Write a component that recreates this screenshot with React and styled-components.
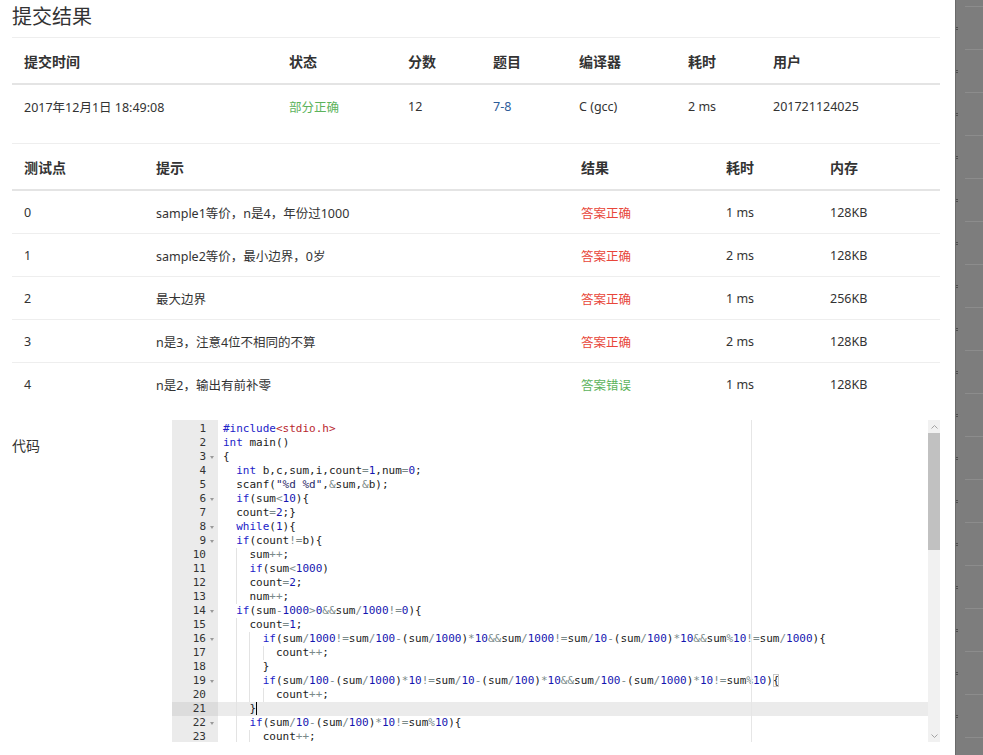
import React from 'react';
import styled, { createGlobalStyle } from 'styled-components';

const GlobalStyle = createGlobalStyle`
  html, body {
    margin: 0;
    padding: 0;
    height: 755px;
    overflow: hidden;
    background: #fff;
  }
  body {
    font-family: "Noto Sans", "Noto Sans CJK SC", sans-serif;
    color: #333;
  }
`;

const colors = {
  text: '#333',
  line: '#eeeeee',
  headLine: '#e4e4e4',
  ok: '#e8463a',
  good: '#5cb35c',
  link: '#2d5c9a',
};

const Page = styled.div`
  display: flex;
  height: 755px;
  overflow: hidden;
`;

const Modal = styled.div`
  width: 955px;
  flex-shrink: 0;
  box-sizing: border-box;
  padding: 0 15px 0 12px;
  background: #fff;
`;

const Backdrop = styled.div`
  flex: 1;
  border-left: 1px solid #6a6a6a;
  background-color: #7d7d7d;
  background-image:
    repeating-linear-gradient(
      to bottom,
      transparent 0 27px,
      #4e4e4e 27px 28px,
      transparent 28px 29px,
      #4e4e4e 29px 30px,
      transparent 30px 43px
    ),
    repeating-linear-gradient(
      to bottom,
      transparent 0 6px,
      #8c8c8c 6px 7px,
      transparent 7px 43px
    );
  background-size: 2px 100%, calc(100% - 9px) 100%;
  background-position: 0 0, 9px 0;
  background-repeat: no-repeat, no-repeat;
`;

const Title = styled.h2`
  margin: 0;
  height: 37px;
  box-sizing: border-box;
  padding-top: 3px;
  font-size: 20px;
  line-height: 28px;
  font-weight: 400;
  color: ${colors.text};
`;

const Grid = styled.div`
  margin-top: ${(p) => p.$gap || 0}px;
`;

const Row = styled.div`
  display: grid;
  grid-template-columns: ${(p) => p.$cols};
  align-items: center;
  height: ${(p) => (p.$head ? 45 : p.$tall ? 43 : 42)}px;
  border-top: ${(p) => (p.$first ? 'none' : `1px solid ${colors.line}`)};
  border-bottom: ${(p) => (p.$head ? `2px solid ${colors.headLine}` : 'none')};
`;

const Cell = styled.div`
  padding-left: 12px;
  font-size: ${(p) => (p.$head ? 14 : 12.5)}px;
  font-weight: ${(p) => (p.$head ? 700 : 400)};
  color: ${(p) => p.$color || colors.text};
  white-space: nowrap;
`;

const CodeSection = styled.div`
  display: flex;
  margin-top: 15px;
`;

const Label = styled.div`
  width: 160px;
  padding-top: 16px;
  font-size: 14px;
  line-height: 20px;
`;

const Editor = styled.div`
  display: flex;
  width: 768px;
  height: 322px;
  overflow: hidden;
  font-family: "DejaVu Sans Mono", "Liberation Mono", monospace;
  font-size: 11px;
  line-height: 14px;
`;

const Gutter = styled.div`
  width: 46px;
  flex-shrink: 0;
  background: #ebebeb;
  padding-top: 2px;
  color: #333;
`;

const GutterCell = styled.div`
  display: flex;
  justify-content: flex-end;
  height: 14px;
  background: ${(p) => (p.$active ? '#dcdcdc' : 'transparent')};
`;

const FoldSlot = styled.span`
  width: 12px;
  display: flex;
  align-items: center;
  padding-left: 4px;
  box-sizing: border-box;
`;

const FoldArrow = styled.span`
  width: 0;
  height: 0;
  border-left: 2.5px solid transparent;
  border-right: 2.5px solid transparent;
  border-top: 3px solid #9a9a9a;
`;

const CodeArea = styled.div`
  flex: 1;
  position: relative;
  padding-top: 2px;
  overflow: hidden;
`;

const PrintMargin = styled.div`
  position: absolute;
  top: 0;
  bottom: 0;
  left: 533px;
  width: 1px;
  background: #e6e6e6;
`;

const CodeLine = styled.div`
  height: 14px;
  padding-left: 5px;
  white-space: pre;
  color: #1c1c1c;
  background: ${(p) => (p.$active ? '#ebebeb' : 'transparent')};
`;

const Indent = styled.span`
  display: inline-block;
  width: 2ch;
  height: 14px;
  vertical-align: top;
  box-sizing: border-box;
  border-left: ${(p) => (p.$guide ? '1px solid #e3e3e3' : 'none')};
`;

const tokenColors = {
  kw: '#2222c8',
  num: '#1515b0',
  op: '#7a8a8a',
  inc: '#b8262e',
  str: '#2a2a6a',
  plain: 'inherit',
};

const Tok = styled.span`
  color: ${(p) => tokenColors[p.$type]};
`;

const Matched = styled.span`
  outline: 1px solid #c8c8c8;
  outline-offset: -1px;
`;

const Cursor = styled.span`
  display: inline-block;
  width: 1px;
  height: 13px;
  background: #000;
  vertical-align: top;
`;

const Scrollbar = styled.div`
  width: 12px;
  flex-shrink: 0;
  display: flex;
  flex-direction: column;
  align-items: center;
  background: #f1f1f1;
`;

const ScrollArrow = styled.div`
  height: 13px;
  width: 12px;
  display: flex;
  align-items: center;
  justify-content: center;
  color: #a3a3a3;
`;

const Thumb = styled.div`
  width: 12px;
  height: 117px;
  background: #c1c1c1;
`;

const Spacer = styled.div`
  flex: 1;
`;

const KEYWORDS = new Set(['int', 'if', 'while']);

const tokenize = (text) => {
  const re = /(#include)|(<stdio\.h>)|("[^"]*")|(\d+)|([A-Za-z_]\w*)|([=!<>+\-*\/%&]+)|(.)/g;
  const out = [];
  let m;
  while ((m = re.exec(text))) {
    let type = 'plain';
    if (m[1]) type = 'kw';
    else if (m[2]) type = 'inc';
    else if (m[3]) type = 'str';
    else if (m[4]) type = 'num';
    else if (m[5]) type = KEYWORDS.has(m[5]) ? 'kw' : 'plain';
    else if (m[6]) type = 'op';
    out.push({ type, text: m[0] });
  }
  return out;
};

const code = [
  '#include<stdio.h>',
  'int main()',
  '{',
  '  int b,c,sum,i,count=1,num=0;',
  '  scanf("%d %d",&sum,&b);',
  '  if(sum<10){',
  '  count=2;}',
  '  while(1){',
  '  if(count!=b){',
  '    sum++;',
  '    if(sum<1000)',
  '    count=2;',
  '    num++;',
  '  if(sum-1000>0&&sum/1000!=0){',
  '    count=1;',
  '      if(sum/1000!=sum/100-(sum/1000)*10&&sum/1000!=sum/10-(sum/100)*10&&sum%10!=sum/1000){',
  '        count++;',
  '      }',
  '      if(sum/100-(sum/1000)*10!=sum/10-(sum/100)*10&&sum/100-(sum/1000)*10!=sum%10){',
  '        count++;',
  '    }',
  '    if(sum/10-(sum/100)*10!=sum%10){',
  '      count++;',
];

const folds = new Set([3, 6, 8, 9, 14, 16, 19, 22]);
const activeLine = 21;
const matchLine = 19;

const Line = ({ text, n }) => {
  const indent = text.match(/^ */)[0].length;
  const body = text.slice(indent);
  const units = Math.floor(indent / 2);
  const tokens = tokenize(body);
  return (
    <CodeLine $active={n === activeLine}>
      {Array.from({ length: units }, (_, i) => (
        <Indent key={i} $guide={i > 0} />
      ))}
      {tokens.map((t, i) => {
        const last = i === tokens.length - 1;
        if (n === matchLine && last && t.text === '{') {
          return <Matched key={i}>{'{'}</Matched>;
        }
        return (
          <Tok key={i} $type={t.type}>
            {t.text}
          </Tok>
        );
      })}
      {n === activeLine && <Cursor />}
    </CodeLine>
  );
};

const submitCols = '265px 119px 85px 86px 109px 85px 1fr';
const caseCols = '132px 425px 145px 104px 1fr';

const cases = [
  ['0', 'sample1等价，n是4，年份过1000', '答案正确', '1 ms', '128KB'],
  ['1', 'sample2等价，最小边界，0岁', '答案正确', '2 ms', '128KB'],
  ['2', '最大边界', '答案正确', '1 ms', '256KB'],
  ['3', 'n是3，注意4位不相同的不算', '答案正确', '2 ms', '128KB'],
  ['4', 'n是2，输出有前补零', '答案错误', '1 ms', '128KB'],
];

const App = () => (
  <Page>
    <GlobalStyle />
    <Modal>
      <Title>提交结果</Title>
      <Grid>
        <Row $head $cols={submitCols}>
          {['提交时间', '状态', '分数', '题目', '编译器', '耗时', '用户'].map((h) => (
            <Cell $head key={h}>
              {h}
            </Cell>
          ))}
        </Row>
        <Row $first $tall $cols={submitCols}>
          <Cell>2017年12月1日 18:49:08</Cell>
          <Cell $color={colors.good}>部分正确</Cell>
          <Cell>12</Cell>
          <Cell $color={colors.link}>7-8</Cell>
          <Cell>C (gcc)</Cell>
          <Cell>2 ms</Cell>
          <Cell>201721124025</Cell>
        </Row>
      </Grid>
      <Grid $gap={15}>
        <Row $head $cols={caseCols}>
          {['测试点', '提示', '结果', '耗时', '内存'].map((h) => (
            <Cell $head key={h}>
              {h}
            </Cell>
          ))}
        </Row>
        {cases.map((c, i) => (
          <Row key={c[0]} $first={i === 0} $cols={caseCols}>
            <Cell>{c[0]}</Cell>
            <Cell>{c[1]}</Cell>
            <Cell $color={c[2] === '答案正确' ? colors.ok : colors.good}>{c[2]}</Cell>
            <Cell>{c[3]}</Cell>
            <Cell>{c[4]}</Cell>
          </Row>
        ))}
      </Grid>
      <CodeSection>
        <Label>代码</Label>
        <Editor>
          <Gutter>
            {code.map((_, i) => (
              <GutterCell key={i} $active={i + 1 === activeLine}>
                <span>{i + 1}</span>
                <FoldSlot>{folds.has(i + 1) && <FoldArrow />}</FoldSlot>
              </GutterCell>
            ))}
          </Gutter>
          <CodeArea>
            <PrintMargin />
            {code.map((t, i) => (
              <Line key={i} text={t} n={i + 1} />
            ))}
          </CodeArea>
          <Scrollbar>
            <ScrollArrow>
              <svg width="7" height="4" viewBox="0 0 7 4">
                <path d="M0.5 3.5 L3.5 0.5 L6.5 3.5" fill="none" stroke="currentColor" />
              </svg>
            </ScrollArrow>
            <Thumb />
            <Spacer />
            <ScrollArrow>
              <svg width="7" height="4" viewBox="0 0 7 4">
                <path d="M0.5 0.5 L3.5 3.5 L6.5 0.5" fill="none" stroke="currentColor" />
              </svg>
            </ScrollArrow>
          </Scrollbar>
        </Editor>
      </CodeSection>
    </Modal>
    <Backdrop />
  </Page>
);

export default App;
